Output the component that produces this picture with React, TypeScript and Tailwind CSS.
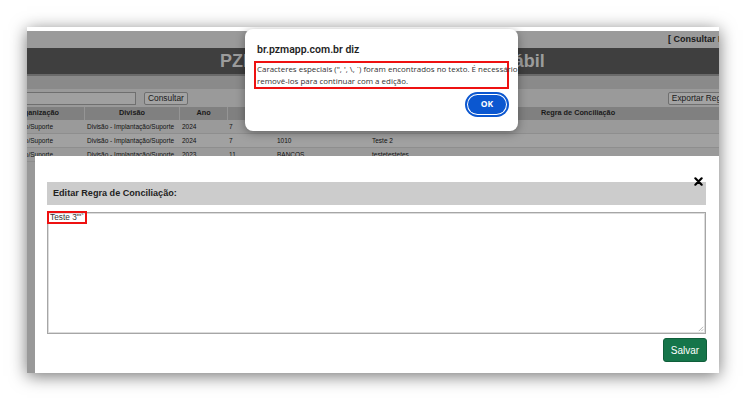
import React from 'react';

const cellRow = 'flex h-[14px] items-center text-[6.5px] text-[#111] whitespace-nowrap';

function Row({ bg, org, div, ano, mes, conta, regra }: { bg: string; org: string; div: string; ano: string; mes: string; conta: string; regra: string }) {
  return (
    <div className={`${cellRow} ${bg} border-b border-[#8e8e8e]`}>
      <div className="w-[58px] shrink-0 flex justify-end overflow-hidden pr-[32px]">{org}</div>
      <div className="w-[95px] shrink-0 pl-[2px] overflow-hidden">{div}</div>
      <div className="w-[48px] shrink-0 pl-[2px]">{ano}</div>
      <div className="w-[47px] shrink-0 pl-[1px]">{mes}</div>
      <div className="w-[95px] shrink-0 pl-[2px]">{conta}</div>
      <div className="w-[416px] shrink-0 pl-[2px]">{regra}</div>
    </div>
  );
}

export default function App() {
  return (
    <div className="w-[744px] h-[398px] bg-white pt-[27px] pl-[27px] font-['Liberation_Sans',Arial,sans-serif]">
      <div className="relative w-[692px] h-[346px] overflow-hidden bg-[#999] shadow-[0_3px_16px_rgba(0,0,0,0.55)]">
        {/* page behind the modal overlay */}
        <div className="h-[4px] bg-white" />
        <div className="h-[17px] bg-[#9a9a9a] flex items-center pl-[641px] whitespace-nowrap">
          <span className="text-[9px] font-bold text-[#1a1a1a]">[ Consultar Histórico ]</span>
        </div>
        <div className="h-[26px] bg-[#3f3f3f] flex items-center pl-[193px] whitespace-nowrap">
          <span className="text-[18px] font-bold text-[#9c9c9c]">PZMAPP - Regra Conciliação Contábil</span>
        </div>
        <div className="h-[2px] bg-[#6a6a6a]" />
        <div className="h-[13px] bg-[#8a8a8a]" />
        <div className="h-[18px] bg-[#9a9a9a] flex items-center whitespace-nowrap">
          <div className="w-[113px] shrink-0 h-[13px] border border-[#6f6f6f] bg-[#a0a0a0] -ml-[4px]" />
          <button className="ml-[8px] shrink-0 h-[13px] px-[3px] border border-[#6f6f6f] rounded-[2px] bg-[#a3a3a3] text-[8.4px] text-[#1a1a1a] leading-none">Consultar</button>
          <button className="ml-[480px] shrink-0 h-[13px] px-[3px] border border-[#6f6f6f] rounded-[2px] bg-[#a3a3a3] text-[8.4px] text-[#1a1a1a] leading-none">Exportar Regras</button>
        </div>
        <div className="flex h-[13px] items-center bg-[#808080] text-[7.3px] font-bold text-[#1a1a1a] whitespace-nowrap">
          <div className="w-[58px] shrink-0 h-full flex items-center justify-end overflow-hidden pr-[25px] border-r border-[#959595]">Organização</div>
          <div className="w-[95px] shrink-0 h-full flex items-center justify-center border-r border-[#959595]">Divisão</div>
          <div className="w-[48px] shrink-0 h-full flex items-center justify-center border-r border-[#959595]">Ano</div>
          <div className="w-[47px] shrink-0 h-full flex items-center justify-center border-r border-[#959595] pl-[40px]">Mês</div>
          <div className="w-[95px] shrink-0 h-full flex items-center justify-center border-r border-[#959595]">Conta</div>
          <div className="w-[416px] shrink-0 h-full flex items-center justify-center">Regra de Conciliação</div>
        </div>
        <Row bg="bg-[#9a9a9a]" org="Implantação/Suporte" div="Divisão - Implantação/Suporte" ano="2024" mes="7" conta="" regra="" />
        <Row bg="bg-[#a1a1a1]" org="Implantação/Suporte" div="Divisão - Implantação/Suporte" ano="2024" mes="7" conta="1010" regra="Teste 2" />
        <Row bg="bg-[#9a9a9a]" org="Implantação/Suporte" div="Divisão - Implantação/Suporte" ano="2023" mes="11" conta="BANCOS" regra="testetestetes" />

        {/* edit modal */}
        <div className="absolute left-[8px] top-[129px] right-0 bottom-0 bg-white pl-[12px] pr-[13px] pt-[26px]">
          <button className="absolute right-[16px] top-[21px] w-[9px] h-[9px]">
            <svg viewBox="0 0 10 10" className="w-[9px] h-[9px]">
              <path d="M1.5 1.5 L8.5 8.5 M8.5 1.5 L1.5 8.5" stroke="#000" strokeWidth="2.4" strokeLinecap="round" />
            </svg>
          </button>
          <div className="h-[23px] bg-[#cccccc] flex items-center pl-[6px] text-[9.1px] font-bold text-[#222]">Editar Regra de Conciliação:</div>
          <div className="relative mt-[7px] h-[122px] border border-[#a6a6a6] shadow-[inset_0_0_0_1px_#dcdcdc]">
            <span className="absolute left-[-1px] top-[-2px] h-[13px] border-2 border-[#ee1111] pl-[1px] pr-[1px] text-[8.3px] leading-[9px] text-[#333] whitespace-nowrap">Teste 3"'`</span>
            <svg viewBox="0 0 8 8" className="absolute right-[1px] bottom-[1px] w-[7px] h-[7px]">
              <path d="M7 2 L2 7 M7 5 L5 7" stroke="#999" strokeWidth="0.8" />
            </svg>
          </div>
          <div className="flex justify-end mt-[4px] -mr-[1px]">
            <button className="w-[44px] h-[24px] rounded-[3px] bg-[#15754a] border border-[#0f5e3a] text-[10px] text-white">Salvar</button>
          </div>
        </div>

        {/* browser alert */}
        <div className="absolute left-[218px] top-[2px] w-[273px] h-[102px] bg-white rounded-[8px] shadow-[0_2px_10px_rgba(0,0,0,0.35)] pt-[13px] px-[9px] font-['Open_Sans','Noto_Sans',sans-serif]">
          <div className="pl-[3px] text-[10.5px] leading-[16px] font-semibold text-[#1f1f1f] font-['Roboto',sans-serif]">br.pzmapp.com.br diz</div>
          <div className="mt-[3px] border-2 border-[#ee1111] px-[1px] text-[7.95px] leading-[12px] text-[#333] whitespace-nowrap">
            <div>Caracteres especiais (", ', \, `) foram encontrados no texto. É necessário</div>
            <div>removê-los para continuar com a edição.</div>
          </div>
          <div className="flex justify-end mt-[6px] pr-[3px]">
            <button className="w-[38px] h-[19px] rounded-full bg-[#0b57d0] ring-2 ring-[#0b57d0] ring-offset-1 text-[8.5px] font-bold text-white leading-none">OK</button>
          </div>
        </div>
      </div>
    </div>
  );
}
